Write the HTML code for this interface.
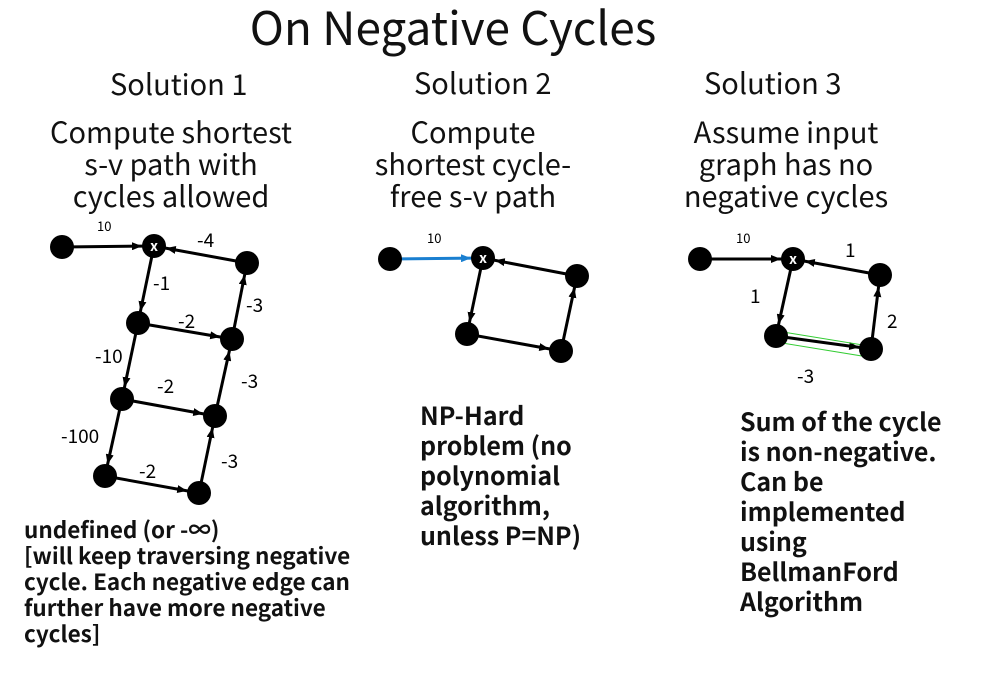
<!DOCTYPE html>
<html><head><meta charset="utf-8"><style>
body{margin:0;width:984px;height:674px;background:#fff;overflow:hidden;position:relative;font-family:"Noto Sans CJK JP","Liberation Sans",sans-serif;color:#111}
.t{position:absolute;white-space:nowrap}
.c{text-align:center;line-height:32px;font-size:29px}
.s{font-size:29px;line-height:36px}
</style></head><body>
<div class="t" style="left:0;width:906px;top:-4px;text-align:center;font-size:46px;line-height:60px">On Negative Cycles</div>
<div class="t s" style="left:110px;top:65px">Solution 1</div>
<div class="t s" style="left:414px;top:64px">Solution 2</div>
<div class="t s" style="left:704px;top:64px">Solution 3</div>
<div class="t c" style="left:40px;width:262px;top:115px">Compute shortest<br>s-v path with<br>cycles allowed</div>
<div class="t c" style="left:360px;width:226px;top:115px">Compute<br>shortest cycle-<br>free s-v path</div>
<div class="t c" style="left:670px;width:232px;top:115px">Assume input<br>graph has no<br>negative cycles</div>
<div class="t" style="left:420px;top:400px;font-weight:bold;font-size:25px;line-height:30px">NP-Hard<br>problem (no<br>polynomial<br>algorithm,<br>unless P=NP)</div>
<div class="t" style="left:740px;top:406px;font-weight:bold;font-size:25px;line-height:30px">Sum of the cycle<br>is non-negative.<br>Can be<br>implemented<br>using<br>BellmanFord<br>Algorithm</div>
<div class="t" style="left:24px;top:516px;font-size:22.5px;line-height:26px;font-weight:bold">undefined (or -∞)<br>[will keep traversing negative<br>cycle. Each negative edge can<br>further have more negative<br>cycles]</div>
<svg width="984" height="674" style="position:absolute;left:0;top:0" font-family="Noto Sans CJK JP, Liberation Sans, sans-serif">
<defs><marker id="a" markerUnits="userSpaceOnUse" viewBox="0 0 10 8" refX="22" refY="4" markerWidth="10" markerHeight="8" orient="auto"><path d="M0,0L10,4L0,8z" fill="#000"/></marker>
<marker id="ab" markerUnits="userSpaceOnUse" viewBox="0 0 10 8" refX="22" refY="4" markerWidth="10" markerHeight="8" orient="auto"><path d="M0,0L10,4L0,8z" fill="#1a7fd0"/></marker></defs>
<g stroke="#000" stroke-width="3" marker-end="url(#a)">
<line x1="62" y1="247" x2="154" y2="246"/><line x1="154" y1="246" x2="138" y2="323"/><line x1="247" y1="263" x2="154" y2="246"/>
<line x1="138" y1="323" x2="232" y2="339"/><line x1="232" y1="339" x2="247" y2="263"/><line x1="138" y1="323" x2="122" y2="399"/>
<line x1="122" y1="399" x2="215" y2="416"/><line x1="215" y1="416" x2="232" y2="339"/><line x1="122" y1="399" x2="105" y2="476"/>
<line x1="105" y1="476" x2="199" y2="493"/><line x1="199" y1="493" x2="215" y2="416"/>
<line x1="483" y1="258" x2="467" y2="334"/><line x1="577" y1="276" x2="483" y2="258"/><line x1="467" y1="334" x2="561" y2="351"/><line x1="561" y1="351" x2="577" y2="276"/>
<line x1="700" y1="259" x2="793" y2="259"/><line x1="793" y1="259" x2="776" y2="336"/><line x1="880" y1="275" x2="793" y2="259"/><line x1="776" y1="336" x2="871" y2="349"/><line x1="871" y1="349" x2="880" y2="275"/>
</g>
<line x1="390" y1="259" x2="483" y2="258" stroke="#1a7fd0" stroke-width="3" marker-end="url(#ab)"/>
<polygon points="783,332 863,345 862,356 782,343" fill="none" stroke="#3c3" stroke-width="1"/>
<g fill="#000">
<circle cx="62" cy="247" r="12"/><circle cx="154" cy="246" r="12"/><circle cx="247" cy="263" r="12"/><circle cx="138" cy="323" r="12"/><circle cx="232" cy="339" r="12"/><circle cx="122" cy="399" r="12"/><circle cx="215" cy="416" r="12"/><circle cx="105" cy="476" r="12"/><circle cx="199" cy="493" r="12"/>
<circle cx="390" cy="259" r="12"/><circle cx="483" cy="258" r="12"/><circle cx="577" cy="276" r="12"/><circle cx="467" cy="334" r="12"/><circle cx="561" cy="351" r="12"/>
<circle cx="700" cy="259" r="12"/><circle cx="793" cy="259" r="12"/><circle cx="880" cy="275" r="12"/><circle cx="776" cy="336" r="12"/><circle cx="871" cy="349" r="12"/>
</g>
<g fill="#fff" font-size="14" font-weight="bold" text-anchor="middle"><text x="154" y="251">x</text><text x="483" y="263">x</text><text x="793" y="264">x</text></g>
<g fill="#000" font-size="13"><text x="97" y="231">10</text><text x="427" y="243">10</text><text x="736" y="243">10</text></g>
<g fill="#000" font-size="19">
<text x="197" y="247">-4</text><text x="153" y="290">-1</text><text x="246" y="312">-3</text><text x="178" y="328">-2</text>
<text x="95" y="363">-10</text><text x="241" y="388">-3</text><text x="157" y="393">-2</text><text x="61" y="443">-100</text>
<text x="221" y="468">-3</text><text x="139" y="478">-2</text>
<text x="845" y="257">1</text><text x="750" y="303">1</text><text x="887" y="328">2</text><text x="797" y="383">-3</text>
</g>
</svg>
</body></html>
